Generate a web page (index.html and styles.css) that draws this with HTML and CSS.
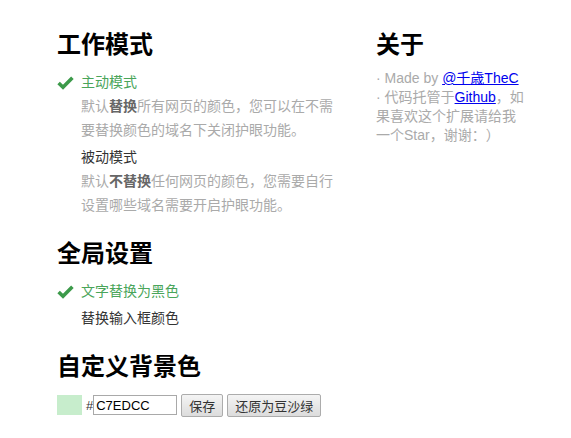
FILE: index.html
```html
<!DOCTYPE html>
<html lang="zh-CN">
<head>
<meta charset="utf-8">
<link rel="stylesheet" href="styles.css">
</head>
<body>
<div class="page">
  <div class="main">
    <section class="section first">
      <h2 class="title">工作模式</h2>
      <div class="item active">
        <svg class="check" viewBox="0 0 17 14" width="17" height="14"><path d="M1.6 7 L6 11.2 L15.4 1.8" fill="none" stroke="#3c9a4a" stroke-width="3.6"/></svg>
        <div class="label">主动模式</div>
        <div class="desc">默认<b>替换</b>所有网页的颜色，您可以在不需<br>要替换颜色的域名下关闭护眼功能。</div>
      </div>
      <div class="item">
        <div class="label">被动模式</div>
        <div class="desc">默认<b>不替换</b>任何网页的颜色，您需要自行<br>设置哪些域名需要开启护眼功能。</div>
      </div>
    </section>
    <section class="section">
      <h2 class="title">全局设置</h2>
      <div class="item active">
        <svg class="check" viewBox="0 0 17 14" width="17" height="14"><path d="M1.6 7 L6 11.2 L15.4 1.8" fill="none" stroke="#3c9a4a" stroke-width="3.6"/></svg>
        <div class="label">文字替换为黑色</div>
      </div>
      <div class="item">
        <div class="label">替换输入框颜色</div>
      </div>
    </section>
    <section class="section">
      <h2 class="title">自定义背景色</h2>
      <div class="color-row">
        <span class="swatch"></span>
        <span class="hash">#</span><input class="hex" type="text" value="C7EDCC">
        <button class="btn">保存</button>
        <button class="btn">还原为豆沙绿</button>
      </div>
    </section>
  </div>
  <aside class="about">
    <h2 class="title">关于</h2>
    <p class="about-text">· Made by <a href="#">@千歳TheC</a><br>· 代码托管于<a href="#">Github</a>，如<br>果喜欢这个扩展请给我<br>一个Star，谢谢：）</p>
  </aside>
</div>
</body>
</html>
```
FILE: styles.css
```css
html, body {
  margin: 0;
  padding: 0;
  background: #fff;
}
body {
  font-family: "Liberation Sans", "Noto Sans CJK SC", sans-serif;
  font-size: 14px;
  color: #333;
  text-spacing-trim: space-all;
}
.page {
  display: flex;
  padding: 29px 0 0 57px;
}
.main {
  width: 283px;
}
.about {
  width: 160px;
  margin-left: 36px;
}
.title {
  margin: 0 0 10px;
  font-size: 24px;
  line-height: 32px;
  font-weight: bold;
  color: #000;
}
.section {
  margin-top: 22px;
}
.section.first {
  margin-top: 0;
}
.item {
  position: relative;
  padding-left: 24px;
  margin-bottom: 5px;
}
.check {
  position: absolute;
  left: 0;
  top: 5px;
}
.label {
  line-height: 22px;
  color: #333;
}
.item.active .label {
  color: #4aa55a;
}
.desc {
  font-family: "Noto Sans CJK SC", sans-serif;
  line-height: 24px;
  color: #aaa;
  white-space: nowrap;
}
.desc b {
  color: #666;
}
.color-row {
  display: flex;
  align-items: center;
  height: 24px;
}
.swatch {
  width: 25px;
  height: 20px;
  background: #c7edcc;
}
.hash {
  margin-left: 4px;
  font-size: 13px;
  color: #333;
}
.hex {
  width: 78px;
  height: 16px;
  padding: 1px 2px;
  border: 1px solid #a9a9a9;
  font-family: "Liberation Sans", sans-serif;
  font-size: 13px;
  color: #000;
  margin: 0 4px 0 0;
}
.btn {
  height: 23px;
  padding: 0 7px;
  margin: 0 4px 0 0;
  border: 1px solid #acacac;
  border-radius: 2px;
  background: linear-gradient(#f4f4f4, #dcdcdc);
  font-family: "Liberation Sans", "Noto Sans CJK SC", sans-serif;
  font-size: 13px;
  color: #333;
}
.about .title {
  margin-bottom: 8px;
}
.about-text {
  margin: 0;
  line-height: 19px;
  color: #aaa;
  white-space: nowrap;
}
.about-text a {
  color: #00e;
}
```
